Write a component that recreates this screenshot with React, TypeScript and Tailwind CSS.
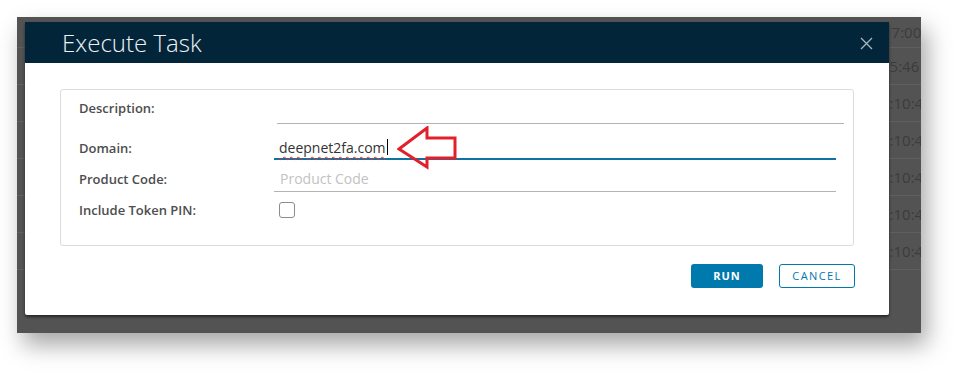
// Rows of the page behind the dialog (only their right edge shows)
const rows = [
  { h: 'h-[31px]', text: '17:00', ml: 'ml-[866px]' },
  { h: 'h-[37px]', text: '05:46 AM', ml: 'ml-[864px]' },
  { h: 'h-[37px]', text: '2:10:42 PM', ml: 'ml-[864px]' },
  { h: 'h-[37px]', text: '2:10:42 PM', ml: 'ml-[864px]' },
  { h: 'h-[37px]', text: '2:10:42 PM', ml: 'ml-[864px]' },
  { h: 'h-[37px]', text: '2:10:42 PM', ml: 'ml-[864px]' },
  { h: 'h-[37px]', text: '2:10:42 PM', ml: 'ml-[864px]' },
];

const App = () => {
  return (
    <div className="h-[381px] w-[969px] bg-white pl-[17px] pt-[17px] font-['Open_Sans',sans-serif]">
      <div className="relative h-[316px] w-[904px] overflow-hidden bg-[#535353] shadow-[6px_12px_22px_rgba(0,0,0,0.35)]">
        {/* Background table */}
        <div className="flex flex-col">
          {rows.map((r, i) => (
            <div key={i} className={`${r.h} flex items-center border-b border-[#5f5f5f]`}>
              <span className={`${r.ml} whitespace-nowrap text-[15px] text-[#3c3c3c]`}>{r.text}</span>
            </div>
          ))}
        </div>

        {/* Dialog */}
        <div className="absolute left-[8px] top-[5px] flex h-[293px] w-[864px] flex-col rounded-[2px] bg-white shadow-[0_2px_3px_rgba(0,0,0,0.55)]">
          {/* Header */}
          <div className="flex h-[41px] items-center justify-between bg-[#03253a] pl-[37px] pr-[16px]">
            <h2 className="text-[24px] font-light leading-[30px] text-[#eef2f4]">Execute Task</h2>
            <svg width="13" height="13" viewBox="0 0 13 13" className="mt-[1px]">
              <path d="M1 1 L12 12 M12 1 L1 12" stroke="#a9b5bd" strokeWidth="1.3" />
            </svg>
          </div>

          {/* Body */}
          <div className="px-[35px] pt-[26px]">
            <div className="flex flex-col rounded-[3px] border border-[#dcdcdc] pb-[17px] pl-[18px] pr-[17px]">
              {/* Description */}
              <div className="flex h-[34px]">
                <label className="w-[195px] pt-[9px] text-[13px] font-semibold leading-[18px] text-[#4d4d4d]">
                  Description:
                </label>
                <div className="ml-[3px] mr-[-8px] flex-1 self-end border-b border-[#b3b3b3]" />
              </div>

              {/* Domain */}
              <div className="flex h-[36px]">
                <label className="w-[195px] pt-[15px] text-[13px] font-semibold leading-[18px] text-[#4d4d4d]">
                  Domain:
                </label>
                <div className="flex h-[24px] flex-1 items-center self-end border-b-2 border-[#0f72a0] pl-[5px] text-[14px] text-[#333]">
                  <span className="underline decoration-[#e0332f] decoration-wavy decoration-1 underline-offset-[3px]">
                    deepnet2fa.com
                  </span>
                  <span className="ml-[1px] h-[16px] w-[1px] bg-black" />
                </div>
              </div>

              {/* Product Code */}
              <div className="flex h-[32px]">
                <label className="w-[195px] pt-[10px] text-[13px] font-semibold leading-[18px] text-[#4d4d4d]">
                  Product Code:
                </label>
                <div className="flex h-[24px] flex-1 items-center self-end border-b border-[#b3b3b3] pb-[3px] pl-[6px] text-[14px] text-[#c2c2c2]">
                  Product Code
                </div>
              </div>

              {/* Include Token PIN */}
              <div className="flex h-[36px] items-center">
                <label className="w-[195px] text-[13px] font-semibold leading-[18px] text-[#4d4d4d]">
                  Include Token PIN:
                </label>
                <div className="ml-[5px] h-[16px] w-[16px] rounded-[3px] border border-[#8c8c8c] bg-white" />
              </div>
            </div>

            {/* Footer */}
            <div className="mt-[18px] flex justify-end gap-[16px]">
              <button className="h-[24px] w-[72px] rounded-[3px] bg-[#0079ad] text-[11px] font-bold tracking-[1px] text-white">
                RUN
              </button>
              <button className="mr-[-1px] h-[24px] w-[76px] rounded-[3px] border border-[#0079ad] bg-white text-[11px] font-medium tracking-[1.4px] text-[#0079ad]">
                CANCEL
              </button>
            </div>
          </div>

          {/* Red annotation arrow */}
          <svg className="absolute left-[372px] top-[104px]" width="62" height="44" viewBox="0 0 62 44">
            <path
              d="M2 23 L30 2 L30 12 L58 12 L58 32 L30 32 L30 41 Z"
              fill="none"
              stroke="#e3202a"
              strokeWidth="3"
              strokeLinejoin="miter"
            />
          </svg>
        </div>
      </div>
    </div>
  );
};

export default App;
